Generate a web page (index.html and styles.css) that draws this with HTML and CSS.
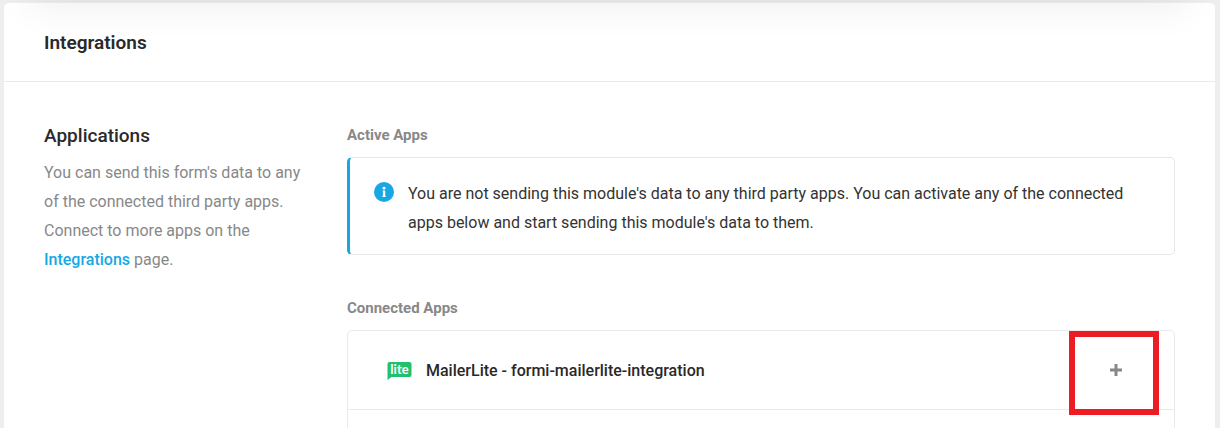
FILE: index.html
```html
<!DOCTYPE html>
<html lang="en">
<head>
    <meta charset="UTF-8">
    <meta name="viewport" content="width=device-width, initial-scale=1.0">
    <title>Integrations</title>
    <link rel="stylesheet" href="styles.css">
</head>
<body>
    <div class="top-shadow"></div>
    <main class="box">
        <header class="box-header">
            <h1>Integrations</h1>
        </header>
        <div class="box-body">
            <section class="settings-intro">
                <h2>Applications</h2>
                <p>You can send this form's data to any of the connected third party apps. Connect to more apps on the <a href="#">Integrations</a> page.</p>
            </section>
            <div class="settings-apps">
                <section class="apps-group">
                    <h3>Active Apps</h3>
                    <div class="notice">
                        <svg class="notice-icon" width="20" height="20" viewBox="0 0 20 20" aria-hidden="true">
                            <circle cx="10" cy="10" r="10" fill="#17a8e3"></circle>
                            <circle cx="10" cy="6.2" r="1.4" fill="#fff"></circle>
                            <path d="M8.700 8.500h2.500v5.200h.5v1.300H8.400v-1.300h.5V9.600h-.2z" fill="#fff"></path>
                        </svg>
                        <p>You are not sending this module's data to any third party apps. You can activate any of the connected apps below and start sending this module's data to them.</p>
                    </div>
                </section>
                <section class="apps-group">
                    <h3>Connected Apps</h3>
                    <ul class="apps-list">
                        <li class="app">
                            <svg class="app-logo" width="25" height="20" viewBox="0 0 25 20" aria-hidden="true">
                                <path d="M2.500 2H22.500Q24.500 2 24.500 4V15Q24.500 17 22.500 17H4.500L.5 20V4Q.5 2 2.500 2Z" fill="#21c16c"></path>
                                <text class="app-logo-text" x="12.500" y="14" text-anchor="middle">lite</text>
                            </svg>
                            <span class="app-name">MailerLite - formi-mailerlite-integration</span>
                            <button type="button" class="app-connect" aria-label="Connect MailerLite">
                                <svg width="12" height="12" viewBox="0 0 12 12" aria-hidden="true">
                                    <path d="M6 0v12M0 6h12" stroke="#888" stroke-width="3"></path>
                                </svg>
                            </button>
                        </li>
                        <li class="app"></li>
                    </ul>
                </section>
            </div>
        </div>
    </main>
</body>
</html>
```
FILE: styles.css
```css
* {
    box-sizing: border-box;
    margin: 0;
    padding: 0;
}

body {
    padding: 3px 5px 0 4px;
    background-color: #eee;
    color: #333;
    font-family: Roboto, "Liberation Sans", sans-serif;
    font-size: 16px;
    line-height: 29px;
    overflow: hidden;
}

/* soft shadow cast over the top of the box */
.top-shadow {
    position: absolute;
    top: -20px;
    left: 32px;
    right: 32px;
    height: 20px;
    box-shadow: 0 0 40px rgba(0, 0, 0, 0.12);
    pointer-events: none;
}

.box {
    background: white;
    border-radius: 5px;
}

.box-header {
    padding: 25px 40px 24px;
    border-bottom: 1px solid #eaeaea;
}

h1 {
    color: #292929;
    font-size: 19px;
    font-weight: 600;
    line-height: 29px;
}

.box-body {
    display: grid;
    grid-template-columns: 264px 1fr;
    gap: 39px;
    padding: 39px 40px 0;
}

h2 {
    margin-bottom: 8px;
    color: #292929;
    font-size: 19px;
    font-weight: 500;
    line-height: 29px;
}

.settings-intro p {
    color: #888;
}

a {
    color: #17a8e3;
    font-weight: 500;
    text-decoration: none;
}

.settings-apps {
    display: flex;
    flex-direction: column;
    gap: 39px;
}

h3 {
    margin-bottom: 7px;
    color: #888;
    font-size: 15px;
    font-weight: 700;
    line-height: 29px;
}

.notice {
    display: flex;
    gap: 14px;
    padding: 21px 24px 17px;
    border: 1px solid #e6e6e6;
    border-left: 3px solid #17a8e3;
    border-radius: 5px;
}

.notice-icon {
    flex-shrink: 0;
    margin-top: 3px;
}

.apps-list {
    border: 1px solid #eaeaea;
    border-radius: 5px;
    list-style: none;
}

.app {
    display: flex;
    align-items: center;
    gap: 14px;
    min-height: 79px;
    padding: 0 19px 0 39px;
}

.app:not(:last-child) {
    border-bottom: 1px solid #eaeaea;
}

.app-logo-text {
    fill: white;
    font-family: Lato, sans-serif;
    font-size: 13px;
    font-weight: 700;
}

.app-name {
    flex: 1;
    color: #292929;
    font-weight: 500;
}

.app-connect {
    position: relative;
    display: flex;
    align-items: center;
    justify-content: center;
    width: 78px;
    height: 78px;
    border: 0;
    background: none;
    cursor: pointer;
}

/* red frame that calls out the connect button */
.app-connect::after {
    content: "";
    position: absolute;
    inset: 0 -4px -6px -8px;
    border: 6px solid #ed1c24;
}
```
